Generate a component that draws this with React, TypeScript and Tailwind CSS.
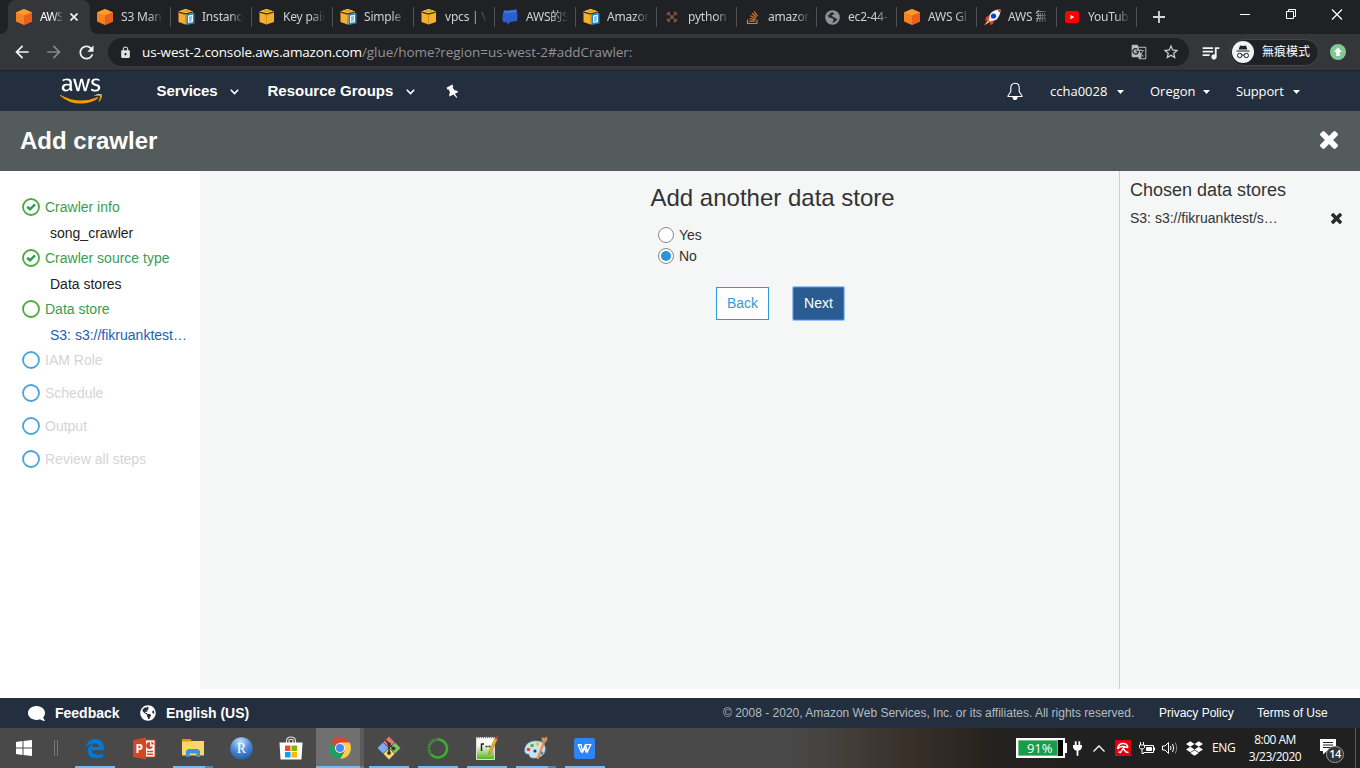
import React from "react";
import { FaAws, FaComment, FaDropbox, FaStackOverflow, FaGlobeAmericas } from "react-icons/fa";
import { MdArrowBack, MdArrowForward, MdRefresh, MdLock, MdStarBorder, MdGTranslate, MdQueueMusic } from "react-icons/md";

const SANS = "font-['Liberation_Sans',Arial,sans-serif]";
const UI = "font-['Open_Sans','Noto_Sans_CJK_TC',sans-serif]";
const TAB = "font-['Noto_Sans','Noto_Sans_CJK_TC',sans-serif]";

/* ---------- Favicons ---------- */

const OrangeCube = () => (
  <svg width="16" height="16" viewBox="0 0 16 16" className="shrink-0">
    <path d="M8 0 16 3.500V12.500L8 16 0 12.500V3.500Z" fill="#f58220" />
    <path d="M8 0 16 3.500 8 6.500 0 3.500Z" fill="#ff9b2d" />
    <path d="M8 6.500 16 3.500V12.500L8 16Z" fill="#e8601c" />
  </svg>
);

const YellowCube = ({ doc = false }: { doc?: boolean }) => (
  <svg width="17" height="16" viewBox="0 0 17 16">
    <path d="M7.500 0 15 2.500V13L7.500 15.500 0.500 13V2.500Z" fill="#f2b02c" />
    <path d="M1 3.200 7.500 5 14.500 3.200" stroke="#4a3208" strokeWidth="1.300" fill="none" />
    <path d="M7.500 5V15.500" stroke="#c98c1c" strokeWidth=".8" fill="none" />
    <path d="M7.500 0 14 2.300 7.500 4 1.200 2.300Z" fill="#fbc341" />
    <path d="M4.500 1.200 11.500 3.200M11 1.200 4.500 3.200" stroke="#c58a1c" strokeWidth=".6" />
    {doc && (
      <g>
        <path d="M8.500 5.200 16.500 4V14.500L8.500 16Z" fill="#1f83c2" />
        <path d="M10 6.500 15 5.800V13L10 14Z" fill="#f2faff" />
        <path d="M11 8.300 14 7.900M11 10.200 14 9.800M11 12.100 13.500 11.700" stroke="#1f83c2" strokeWidth=".9" />
      </g>
    )}
  </svg>
);

const BlueBook = () => (
  <svg width="16" height="16" viewBox="0 0 16 16">
    <path d="M2 1.500Q8 2 14.500 0.500Q16 6 15 12L8 13 6 16 5 13.500 1 13Q-.5 7 2 1.500Z" fill="#2b5fd0" />
    <path d="M2 1.500Q8 2 14.500 .5V3Q8 5 1.500 4Z" fill="#4172d8" />
  </svg>
);

const CrossTools = () => (
  <svg width="12" height="12" viewBox="0 0 14 14" fill="none" stroke="#8a5a48" strokeWidth="2">
    <path d="M2 2 12 12M12 2 2 12M1 4.500 4.500 1M9.500 1 13 4.500M1 9.500 4.500 13M9.500 13 13 9.500" strokeDasharray="2 .6" />
  </svg>
);

const GrayGlobe = () => (
  <svg width="15" height="15" viewBox="0 0 15 15">
    <circle cx="7.500" cy="7.500" r="7.300" fill="#8f9296" />
    <path d="M8 2.200Q4.800 2.200 4.500 4.500L2.500 5.500Q3.500 8 6 8T8.500 10.500L7 12.800Q10.500 12.500 12.500 9.500L10.500 8 8 6.800 6.500 5.200 9.500 4.200Z" fill="#2a2b2e" />
  </svg>
);

const Rocket = () => (
  <svg width="17" height="17" viewBox="0 0 17 17">
    <path d="M6 6 2 8 1 12 6 11ZM10 11 9 15 6 16 6 11Z" fill="#e33a2d" />
    <path d="M16.500 .5Q10 0 6 5L4.500 11 6 12.500 12 11Q16.500 7 16.500 .5Z" fill="#f1f3f8" />
    <circle cx="9.500" cy="7" r="2.600" fill="#123fc8" />
    <path d="M13 .8 16.500 .5 16.300 4Z" fill="#df3d34" />
    <path d="M4 11 0 16.500 6 13Z" fill="#f5b32b" />
  </svg>
);

const YouTube = () => (
  <svg width="14" height="12" viewBox="0 0 14 12">
    <rect width="14" height="12" rx="2.500" fill="#f00" />
    <path d="M5.500 4V8.200L9.200 6.100Z" fill="#fff" />
  </svg>
);

const tabs: { label: string; icon: React.ReactNode }[] = [
  { label: "S3 Man", icon: <OrangeCube /> },
  { label: "Instance", icon: <YellowCube doc /> },
  { label: "Key pair", icon: <YellowCube /> },
  { label: "Simple A", icon: <YellowCube doc /> },
  { label: "vpcs | V", icon: <YellowCube /> },
  { label: "AWS的S", icon: <BlueBook /> },
  { label: "Amazon", icon: <YellowCube doc /> },
  { label: "python", icon: <CrossTools /> },
  { label: "amazon", icon: <FaStackOverflow size={15} color="#e8772a" /> },
  { label: "ec2-44-", icon: <GrayGlobe /> },
  { label: "AWS Gl", icon: <OrangeCube /> },
  { label: "AWS 無", icon: <Rocket /> },
  { label: "YouTub", icon: <YouTube /> },
];

const FADE = "[mask-image:linear-gradient(to_right,black_28px,transparent_42px)]";

function TabStrip() {
  return (
    <div className={`flex h-[34px] bg-[#202124] text-[12px] text-[#cdd0d4] ${TAB}`}>
      <div className="w-2 bg-[#35363a]">
        <div className="h-full w-2 rounded-br-lg bg-[#202124]" />
      </div>
      <div className="flex w-[82px] items-center rounded-t-lg bg-[#35363a] pl-2">
        <OrangeCube />
        <span className="ml-2 w-[22px] shrink-0 whitespace-nowrap tracking-[-0.7px] text-white [mask-image:linear-gradient(to_right,black_12px,transparent_24px)]">AWS</span>
        <svg className="ml-[8px]" width="8" height="8" viewBox="0 0 8 8" stroke="#f1f3f4" strokeWidth="1.700">
          <path d="M.5 .5 7.500 7.500M7.500 .5 .5 7.500" />
        </svg>
      </div>
      <div className="flex w-[1047px] bg-[#35363a]">
        <div className="flex w-full rounded-bl-lg bg-[#202124]">
          {tabs.map((t, i) => (
            <div key={t.label} className={`flex shrink-0 items-center ${i < 7 ? "w-[81px]" : "w-[80px]"}`}>
              <div className="ml-[6px] flex w-[18px] shrink-0 justify-center">{t.icon}</div>
              <span className={`ml-[7px] w-[42px] shrink-0 whitespace-nowrap tracking-[-0.200px] ${FADE}`}>{t.label}</span>
              <div className="ml-auto h-5 w-px bg-[#505256]" />
            </div>
          ))}
        </div>
      </div>
      <svg className="mt-[11px] ml-4" width="12" height="12" viewBox="0 0 12 12" stroke="#d5d7da" strokeWidth="1.800">
        <path d="M6 0V12M0 6H12" />
      </svg>
      <div className="ml-auto flex pt-[9px] pr-[17px]">
        <svg width="103" height="12" viewBox="0 0 103 12" stroke="#fff" fill="none">
          <path d="M0 5.500H10" />
          <path d="M46.500 2.500H53.500V9.500H46.500ZM48.500 2V.5H55.500V7.500H54" />
          <path d="M92 .5 102 10.500M102 .5 92 10.500" strokeWidth="1.200" />
        </svg>
      </div>
    </div>
  );
}

function Toolbar() {
  return (
    <div className={`flex h-9 items-center bg-[#35363a] ${UI}`}>
      <MdArrowBack className="ml-3 shrink-0" size={20} color="#f1f3f4" />
      <MdArrowForward className="ml-3 shrink-0" size={20} color="#86888b" />
      <MdRefresh className="ml-3 shrink-0" size={21} color="#f1f3f4" />
      <div className="ml-[11px] flex h-7 w-[1081px] shrink-0 items-center rounded-full bg-[#202124] pl-[11px]">
        <MdLock size={13} color="#e0e1e3" />
        <div className="ml-[10px] whitespace-nowrap text-[13.500px] tracking-[-0.150px] text-[#8f9296]">
          <span className="text-white">us-west-2.console.aws.amazon.com</span>
          <span className="tracking-[-0.040px]">/glue/home?region=us-west-2#addCrawler:</span>
        </div>
        <MdGTranslate className="ml-auto" size={16} color="#b8babd" />
        <MdStarBorder className="mr-[9px] ml-[15px]" size={18} color="#d0d2d5" />
      </div>
      <MdQueueMusic className="ml-[11px] shrink-0" size={21} color="#f1f3f4" />
      <div className="ml-[9px] flex h-[27px] w-[89px] shrink-0 items-center rounded-full border border-[#46474b] bg-[#202124] pl-px text-[12px] text-white">
        <svg width="22" height="22" viewBox="0 0 22 22">
          <circle cx="11" cy="11" r="11" fill="#f1f3f4" />
          <path d="M8 4.500 11 5 14 4.500 15.300 8.500H6.700ZM4.500 9.500H17.500V10.500H4.500Z" fill="#202124" />
          <circle cx="7.700" cy="14.500" r="2.200" fill="none" stroke="#202124" />
          <circle cx="14.300" cy="14.500" r="2.200" fill="none" stroke="#202124" />
          <path d="M9.800 14H12.200" stroke="#202124" />
        </svg>
        <span className="ml-[8px] whitespace-nowrap">無痕模式</span>
      </div>
      <svg className="ml-[11px] shrink-0" width="16" height="16" viewBox="0 0 16 16">
        <circle cx="8" cy="8" r="8" fill="#81c995" />
        <path d="M8 3.500 12 8H9.800V12H6.200V8H4Z" fill="#fff" />
      </svg>
    </div>
  );
}

/* ---------- AWS console ---------- */

const Chevron = () => (
  <svg className="mt-[2px]" width="9" height="6" viewBox="0 0 9 6" fill="none" stroke="#fff" strokeWidth="1.600">
    <path d="M.8 .8 4.500 4.500 8.200 .8" />
  </svg>
);

const Caret = () => (
  <svg width="7" height="4" viewBox="0 0 7 4" fill="#fff">
    <path d="M0 0H7L3.500 4Z" />
  </svg>
);

const Pin = () => (
  <svg width="13" height="15" viewBox="0 0 13 15" fill="#fff">
    <path d="M.5 3.800 6.300 .6 7.300 2.400 6.600 3.400 8.500 6.200Q11 6 12.300 8L8.900 9.800 11.300 13.600 10.700 13.900 7.400 10.600 3.500 12.600Q2.600 10.300 4 8.400L2.700 5.500 1.400 5.600Z" />
  </svg>
);

const Cross = ({ size }: { size: number }) => (
  <svg width={size} height={size} viewBox="302 238 1188 1188" fill="currentColor">
    <path d="M1490 1258q0 40-28 68l-136 136q-28 28-68 28t-68-28l-294-294-294 294q-28 28-68 28t-68-28l-136-136q-28-28-28-68t28-68l294-294-294-294q-28-28-28-68t28-68l136-136q28-28 68-28t68 28l294 294 294-294q28-28 68-28t68 28l136 136q28 28 28 68t-28 68l-294 294 294 294q28 28 28 68z" transform="translate(0 -64)" />
  </svg>
);

function AwsNav() {
  return (
    <div className={`flex h-[41px] items-center border-t border-[#1b222d] bg-[#232f3e] text-white ${SANS}`}>
      <div className="ml-[60px] grid w-[42px] shrink-0">
        <FaAws className="col-start-1 row-start-1 [clip-path:inset(0_0_39%_0)]" size={42} color="#fff" />
        <FaAws className="col-start-1 row-start-1 [clip-path:inset(61%_0_0_0)]" size={42} color="#f90" />
      </div>
      <div className="ml-[54.500px] flex w-[111px] items-center text-[15px] font-bold">
        <span className="w-[73.500px] tracking-[-0.100px]">Services</span>
        <Chevron />
      </div>
      <div className="flex w-[178.500px] items-center text-[15px] font-bold">
        <span className="w-[138.500px] whitespace-nowrap">Resource Groups</span>
        <Chevron />
      </div>
      <Pin />
      <svg className="ml-auto" width="16" height="18" viewBox="0 0 16 18" fill="none" stroke="#fff" strokeWidth="1.100">
        <path d="M8 1.200C5 1.200 3.800 3.500 3.800 6V9.500L1 13.800V14.500H15V13.800L12.200 9.500V6C12.200 3.500 11 1.200 8 1.200Z" />
        <path d="M6 15.500A2 2 0 0 0 10 15.500Z" fill="#fff" />
      </svg>
      <div className={`mt-[2px] ml-[27px] flex text-[13px] font-medium ${UI}`}>
        <div className="flex w-[100px] items-center"><span className="w-[67px]">ccha0028</span><Caret /></div>
        <div className="flex w-[86px] items-center"><span className="w-[53px]">Oregon</span><Caret /></div>
        <div className="flex w-[124px] items-center"><span className="w-[57px] tracking-[-0.150px]">Support</span><Caret /></div>
      </div>
    </div>
  );
}

type State = "done" | "current" | "todo";

function Step({ label, state, detail, active }: { label: string; state: State; detail?: string; active?: boolean }) {
  const ring = state === "todo" ? "#4ba3db" : "#4cab3a";
  return (
    <div className={detail ? "" : "mb-[7px]"}>
      <div className="flex h-[26px] items-center">
        <svg width="18" height="18" viewBox="0 0 18 18" fill="none">
          <circle cx="9" cy="9" r="8" stroke={ring} strokeWidth="1.800" />
          {state === "done" && <path d="M5.200 8.800 8 11.300 13 6.300" stroke="#2f9e52" strokeWidth="2.500" />}
        </svg>
        <span className={`ml-[5px] whitespace-nowrap ${state === "todo" ? "text-[#d5d5d5]" : "text-[#3a9d50]"}`}>{label}</span>
      </div>
      {detail && (
        <div className={`h-[25px] w-[165px] pl-7 leading-[26px] whitespace-nowrap ${active ? "text-[#1d60b5]" : "text-[#222]"}`}>{detail}</div>
      )}
    </div>
  );
}

function Console() {
  return (
    <div className={`text-[14px] text-[#333] ${SANS}`}>
      <div className="flex h-[60px] items-center bg-[#545b5d] px-5 text-white">
        <h1 className="text-[24px] font-bold">Add crawler</h1>
        <div className="mr-[2px] mb-[2px] ml-auto"><Cross size={18} /></div>
      </div>
      <div className="flex h-[518px] bg-white">
        <aside className="w-[200px] pt-[23px] pl-[22px]">
          <Step label="Crawler info" state="done" detail="song_crawler" />
          <Step label="Crawler source type" state="done" detail="Data stores" />
          <Step label="Data store" state="current" detail="S3: s3://fikruanktest…" active />
          <Step label="IAM Role" state="todo" />
          <Step label="Schedule" state="todo" />
          <Step label="Output" state="todo" />
          <Step label="Review all steps" state="todo" />
        </aside>
        <main className="w-[919px] bg-[#f5f7f7] pt-[12px] pl-[450px]">
          <h2 className="ml-[0.500px] h-[42px] text-[24px] leading-[30px] whitespace-nowrap">Add another data store</h2>
          <div className="ml-2 flex h-[21px] items-center">
            <span className="mr-[5px] mb-px h-4 w-4 rounded-full border border-[#888] bg-white" />
            Yes
          </div>
          <div className="ml-2 flex h-[21px] items-center">
            <span className="mr-[5px] mb-px flex h-4 w-4 items-center justify-center rounded-full border border-[#888] bg-white">
              <span className="h-[10px] w-[10px] rounded-full bg-[#2b93d7]" />
            </span>
            No
          </div>
          <div className="mt-5 ml-[66px] flex items-center gap-6">
            <button className="h-[33px] w-[53px] border border-[#2e9bd8] bg-white text-[#3a98d2]">Back</button>
            <button className="h-[33px] w-[51px] rounded-[1px] border border-[#3a78d0] bg-[#2a5c91] text-white ring-1 ring-[#9cc0fa]">Next</button>
          </div>
        </main>
        <aside className="w-[241px] border-l border-[#ccd0d0] bg-[#f5f7f7] pt-[7px] pl-[10px]">
          <h3 className="h-6 text-[18px] leading-6 whitespace-nowrap">Chosen data stores</h3>
          <div className="mt-[5px] flex h-[22px] items-center">
            <span className="w-[201px] whitespace-nowrap">S3: s3://fikruanktest/s…</span>
            <span className="text-[#2b2b2b]"><Cross size={11} /></span>
          </div>
        </aside>
      </div>
      <div className="h-[9px] bg-white" />
      <footer className="flex h-[30px] items-center bg-[#232f3e] text-[12px] text-white">
        <FaComment className="ml-[28px] -scale-x-100" size={17} />
        <span className="ml-[10px] w-[85px] text-[14px] font-bold">Feedback</span>
        <FaGlobeAmericas size={16} />
        <span className="ml-[10px] text-[14px] font-bold">English (US)</span>
        <span className="ml-auto w-[436px] whitespace-nowrap text-[#b3bcc0]">© 2008 - 2020, Amazon Web Services, Inc. or its affiliates. All rights reserved.</span>
        <span className="w-[98px]">Privacy Policy</span>
        <span className="w-[103px]">Terms of Use</span>
      </footer>
    </div>
  );
}

/* ---------- Taskbar ---------- */

const Edge = () => (
  <svg width="20" height="21" viewBox="0 0 22 22" fill="#0078d7">
    <path d="M1 10C2 3.500 6.500 .5 11.500 .5C17.500 .5 21 5 21 10.500V13H7.500C7.800 16.300 10 17.800 13.500 17.800C16 17.800 18 17.200 19.800 16.100V20.200C17.500 21.300 15 21.700 12.500 21.700C6.500 21.700 3 18.500 3 13.500C3 10 5 7.200 8.200 5.900C5.500 6 2.800 7.500 1 10ZM7.600 9.300H15.200C15.200 7 13.800 5.500 11.600 5.500C9.400 5.500 8 7 7.600 9.300Z" />
  </svg>
);

const PowerPoint = () => (
  <svg width="24" height="23" viewBox="0 0 24 23">
    <path d="M12 3H23V20H12Z" fill="#fff" stroke="#d24726" />
    <path d="M15 14.500H21M15 17.200H21" stroke="#d24726" strokeWidth="1.400" fill="none" />
    <path d="M18 8.500V5A3.500 3.500 0 1 0 21 9.500H18Z" fill="#d24726" />
    <path d="M19.300 4.500V7.500H22Q22 5 19.300 4.500Z" fill="#d24726" />
    <path d="M1 3 14 .5V22.500L1 20Z" fill="#d24726" />
    <text x="3.500" y="16" fontSize="12" fontWeight="bold" fill="#fff" fontFamily="Open Sans">P</text>
  </svg>
);

const Explorer = () => (
  <svg width="22" height="20" viewBox="0 0 22 20">
    <path d="M0 3H22V17.500H0Z" fill="#fbd668" />
    <path d="M0 1H8.500L10 3.500H0Z" fill="#d99a10" />
    <path d="M4 19V13L6 11H16L18 13V19H14.500V15.500H7.500V19Z" fill="#3f93d8" />
  </svg>
);

const RStudio = () => (
  <svg width="23" height="23" viewBox="0 0 23 23">
    <defs><radialGradient id="rb" cx=".45" cy=".2" r=".8"><stop offset="0" stopColor="#c5defa" /><stop offset=".55" stopColor="#4b8cd8" /><stop offset="1" stopColor="#1e5eae" /></radialGradient></defs>
    <circle cx="11.500" cy="11.500" r="11.300" fill="url(#rb)" />
    <text x="11.500" y="15.500" textAnchor="middle" fontSize="14" fill="#fff" fontFamily="Liberation Serif">R</text>
  </svg>
);

const Store = () => (
  <svg width="24" height="24" viewBox="0 0 24 24">
    <path d="M7.500 7V4.500Q8 1 12 1T16.500 4.500V7M10 7V4Q12 2.500 14 4V7" fill="none" stroke="#ddd" strokeWidth="1.200" />
    <path d="M.5 6.500H23.500L22.500 23.500H1.500Z" fill="#fff" />
    <path d="M6 9.500H11.500V15H6Z" fill="#f25022" /><path d="M12.500 9.500H18V15H12.500Z" fill="#7fba00" />
    <path d="M6 16H11.500V21.500H6Z" fill="#00a4ef" /><path d="M12.500 16H18V21.500H12.500Z" fill="#ffb900" />
  </svg>
);

const Chrome = () => (
  <svg width="22" height="22" viewBox="0 0 22 22">
    <path d="M11 11 1.500 5.500A11 11 0 0 1 20.500 5.500Z" fill="#dc4437" />
    <path d="M11 11V5.500H20.500A11 11 0 0 1 11 22L15.800 13.700Z" fill="#fdcf45" />
    <path d="M1.500 5.500 6.200 13.700 11 16H14.500L11 22A11 11 0 0 1 1.500 5.500Z" fill="#1ba261" />
    <path d="M1.500 5.500H11V11L6.200 13.700Z" fill="#dc4437" /><path d="M1.500 5.500 6.200 13.700 7 10Z" fill="#1ba261" />
    <circle cx="11" cy="11" r="5.100" fill="#f1f1f1" /><circle cx="11" cy="11" r="4" fill="#4686f3" />
  </svg>
);

const Git = () => (
  <svg width="24" height="24" viewBox="0 0 24 24" stroke="#333" strokeWidth=".4">
    <path d="M12 .3 17.900 6.200 12 12 6.100 6.200Z" fill="#ee7471" />
    <path d="M6 6.200 11.800 12 6 17.800 .2 12Z" fill="#7da9f7" />
    <path d="M18 6.200 23.800 12 18 17.800 12.200 12Z" fill="#7fc45f" />
    <path d="M12 12 17.800 17.800 12 23.700 6.200 17.800Z" fill="#fbdb6b" />
    <path d="M8.500 4 12 8V17M12 8.500 16.500 12.500" stroke="#333" strokeWidth="1.500" fill="none" />
    <circle cx="12" cy="8" r="1.600" fill="#333" /><circle cx="12" cy="17" r="1.700" fill="#333" /><circle cx="16.500" cy="12.500" r="1.700" fill="#333" />
  </svg>
);

const Anaconda = () => (
  <svg width="22" height="23" viewBox="0 0 22 22" fill="none" stroke="#3eaf2c">
    <path d="M11 2A9 9 0 1 1 4.600 17.400" strokeWidth="2.600" />
    <path d="M4.600 17.400A9 9 0 0 1 11 2" strokeWidth="3" strokeDasharray="1.800 .7" opacity=".75" />
  </svg>
);

const Notepad = () => (
  <svg width="24" height="24" viewBox="0 0 24 24">
    <defs><linearGradient id="np" x2="0" y2="1"><stop offset=".35" stopColor="#f7faf3" /><stop offset="1" stopColor="#4fb50f" /></linearGradient></defs>
    <path d="M1.500 1.500H19.500V23.500H1.500Z" fill="url(#np)" stroke="#ddd" />
    <path d="M2 1.500H19" stroke="#777" strokeWidth="1.500" strokeDasharray="1 1" />
    <path d="M6.500 7.500V15M6.500 8H9M10.500 10.500H12.500M13.500 10.500H15.500" stroke="#222" strokeWidth="1.500" fill="none" />
    <path d="M20 2 22.500 3.500 16 17 13.500 18.500 14 15.500Z" fill="#e9ae28" stroke="#895a13" strokeWidth=".4" />
    <path d="M20 2 22.500 3.500 23 .8 21.500 .3Z" fill="#ce3942" />
  </svg>
);

const Paint = () => (
  <svg width="26" height="24" viewBox="0 0 26 24">
    <path d="M13 5C21 5 23 10 22 15S15 22.500 10 22 7.500 18 5 18 1 16 2 12 7 5 13 5Z" fill="#c8e2f2" stroke="#86b4d1" strokeWidth=".6" />
    <circle cx="5.500" cy="13.500" r="1.800" fill="#e44332" /><circle cx="9" cy="9.500" r="1.800" fill="#5bad39" />
    <circle cx="14.500" cy="8" r="1.800" fill="#efbd34" /><circle cx="12" cy="15" r="1.600" fill="#263e54" /><circle cx="18.500" cy="17" r="1.800" fill="#3884d0" />
    <path d="M21 6 14.500 23" stroke="#e49144" strokeWidth="2.200" />
    <path d="M18.500 5 19 1 21 2 24 .5 24.500 4 22 7Z" fill="#c8935d" />
  </svg>
);

const Wps = () => (
  <svg width="21" height="21" viewBox="0 0 22 22">
    <rect width="22" height="22" rx="2.500" fill="#2d85f5" />
    <path d="M4 7H7.500L9 14.500 12.200 7.500 14 14.500 17.500 7H11.500M4.500 7 7.500 14.500H9.200L11.800 7M14 14.500H12.500L11.500 11" fill="none" stroke="#fff" strokeWidth="1.400" />
  </svg>
);

type Item = { icon: React.ReactNode; line?: boolean; split?: boolean; current?: boolean };

const apps: Item[] = [
  { icon: <Edge />, line: true },
  { icon: <PowerPoint /> },
  { icon: <Explorer />, line: true, split: true },
  { icon: <RStudio /> },
  { icon: <Store /> },
  { icon: <Chrome />, line: true, split: true, current: true },
  { icon: <Git />, line: true },
  { icon: <Anaconda />, line: true },
  { icon: <Notepad />, line: true },
  { icon: <Paint />, line: true, split: true },
  { icon: <Wps />, line: true },
];

function Taskbar() {
  return (
    <div className={`flex h-10 bg-[linear-gradient(to_right,#494949_0%,#494949_58%,#423f3b_62%,#382f27_67%,#24221f_73%,#202020_80%,#202020_100%)] text-[12px] text-white ${UI}`}>
      <div className="flex w-[70px] items-center pl-4">
        <svg width="16" height="16" viewBox="0 0 16 16" fill="#fff">
          <path d="M0 2 6.500 1.100V7.500H0ZM7.500 1 16 0V7.500H7.500ZM0 8.500H6.500V14.900L0 14ZM7.500 8.500H16V16L7.500 15Z" />
        </svg>
        <div className="ml-[22px] h-4 w-1 border-x border-[#777]" />
      </div>
      {apps.map((a, i) => (
        <div key={i} className="flex w-[49px] flex-col items-center">
          <div className={`flex h-[38px] items-center justify-center pt-[2px] ${a.current ? "ml-px w-12 border-r-4 border-[#5b5b5b] bg-[#707070] pl-[3px]" : "w-[49px]"}`}>{a.icon}</div>
          {a.line && (
            <div className={`flex h-[2px] bg-[#76b9ed] ${a.current ? "ml-px w-12" : "w-10"}`}>
              {a.split && <div className={`ml-auto h-full bg-[#5584a8] ${a.current ? "w-1" : "w-2"}`} />}
            </div>
          )}
        </div>
      ))}
      <div className="ml-auto flex items-center">
        <div className="flex h-5 w-[49px] border-2 border-white bg-black">
          <div className="w-[40px] border border-[#6fc28e] bg-[#179c49] pl-[8px] text-[13px] leading-[14px] tracking-[-0.100px]">91%</div>
        </div>
        <div className="h-[10px] w-[2px] bg-white" />
        <svg className="ml-[6px]" width="9" height="15" viewBox="0 0 10 16" fill="#fff">
          <path d="M2 0H4V4H6V0H8V4H10V7Q9 10 6 10.500V16H4V10.500Q1 10 0 7V4H2Z" />
        </svg>
        <svg className="ml-[11px]" width="12" height="7" viewBox="0 0 12 7" fill="none" stroke="#fff" strokeWidth="1.300"><path d="M.5 6.500 6 1 11.500 6.500" /></svg>
        <svg className="ml-[10px]" width="16" height="16" viewBox="0 0 16 16">
          <path d="M0 0H16V16H0Z" fill="#e1000f" />
          <path d="M2.500 9Q3 4 7.500 3.500T13 7.500" fill="none" stroke="#fff" strokeWidth="1.400" />
          <path d="M2.500 9Q5 6 8 6.500T13 7.500M9.500 6.500 5.500 12.500 3.500 12M9 9Q10 12.500 13.500 12.500" fill="none" stroke="#fff" strokeWidth="1.500" />
        </svg>
        <svg className="ml-2" width="17" height="13" viewBox="0 0 17 13" fill="none" stroke="#fff">
          <path d="M5.500 3.500H14.500V10.500H4.500M15.500 5.500V8.500M1.500 0V3M4.500 0V3M.5 3H5.500V5.500Q5 7 3 7T.5 5.500ZM3 7V11.500H5" />
          <path d="M7.500 5.500H12.500V8.500H7.500Z" fill="#fff" />
        </svg>
        <svg className="ml-[6px]" width="17" height="14" viewBox="0 0 17 14" fill="none" stroke="#fff">
          <path d="M.5 5H3L6.500 1.500V12.500L3 9H.5ZM8.500 5Q9.500 7 8.500 9M10.500 3Q13 7 10.500 11" /><path d="M13 1.500Q16.500 7 13 12.500" stroke="#888" />
        </svg>
        <FaDropbox className="ml-[7px]" size={17} />
        <span className="ml-[9px] w-[24px] text-[12px] tracking-[-0.400px]">ENG</span>
        <div className="ml-[10px] w-[58px] text-center text-[12px] leading-[17.500px] tracking-[-0.500px] whitespace-nowrap">8:00 AM<br />3/23/2020</div>
        <div className="relative ml-4 h-[26px] w-[28px]">
          <svg width="16" height="16" viewBox="0 0 16 16" className="mt-[4px]">
            <path d="M0 0H16V12H7L3 15.500V12H0Z" fill="#fff" /><path d="M3 3.500H13M3 6H13M3 8.500H13" stroke="#222" />
          </svg>
          <span className="absolute top-[11px] left-[6px] flex h-[17px] w-[18px] items-center justify-center rounded-full border border-[#999] bg-[#333] text-[11px] font-semibold tracking-[-0.500px]">14</span>
        </div>
        <div className="mr-1 ml-[7px] h-10 w-px bg-[#5a5a5a]" />
      </div>
    </div>
  );
}

export default function App() {
  return (
    <div className="flex h-[768px] w-[1360px] flex-col overflow-hidden bg-white">
      <TabStrip />
      <Toolbar />
      <AwsNav />
      <Console />
      <Taskbar />
    </div>
  );
}
